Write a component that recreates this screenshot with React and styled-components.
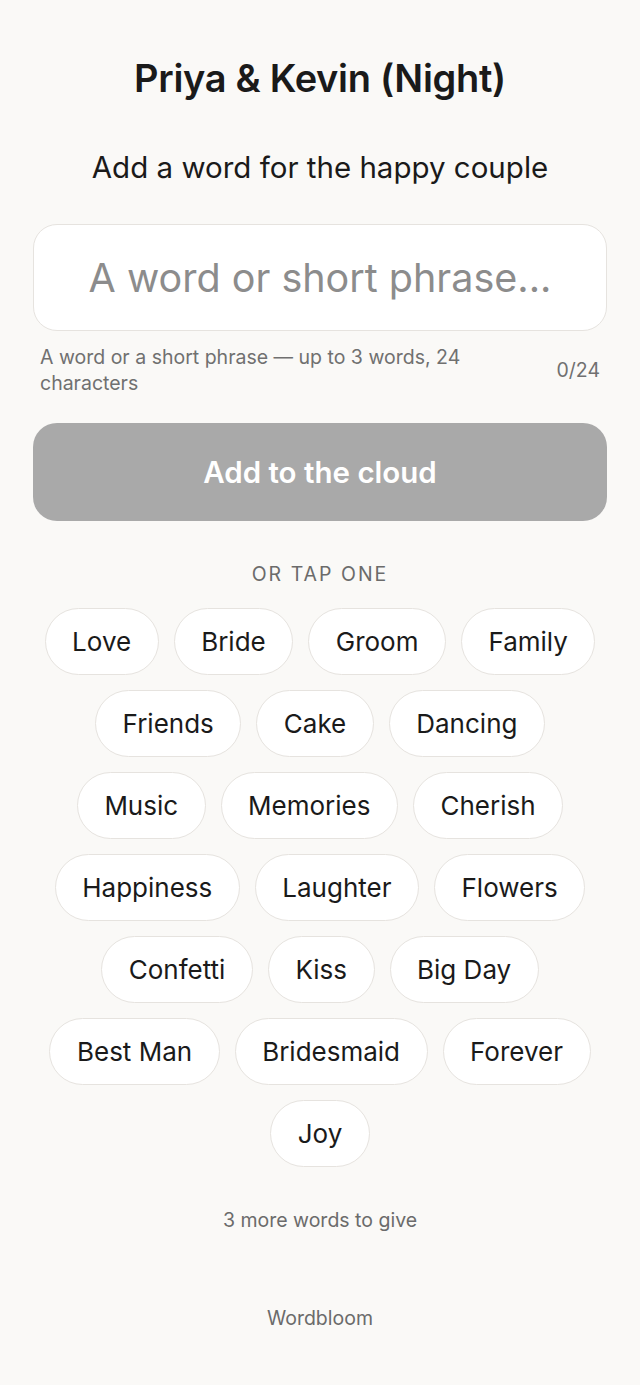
import React, { useState } from "react"
import styled, { createGlobalStyle } from "styled-components"

const GlobalStyle = createGlobalStyle`
  html, body {
    margin: 0;
    padding: 0;
    background: #faf9f7;
  }
  body {
    font-family: Inter, "Noto Sans", sans-serif;
    color: #1a1a1a;
  }
  * {
    box-sizing: border-box;
  }
`

const Page = styled.main`
  display: flex;
  flex-direction: column;
  align-items: stretch;
  padding: 56px 33px 54px;
  min-height: 1385px;
`

const Title = styled.h1`
  margin: 0;
  font-size: 38px;
  line-height: 44px;
  font-weight: 600;
  text-align: center;
  letter-spacing: -0.3px;
`

const Subtitle = styled.p`
  margin: 49px 0 0;
  font-size: 29.5px;
  line-height: 36px;
  font-weight: 400;
  text-align: center;
`

const WordInput = styled.input`
  margin-top: 39px;
  height: 107px;
  width: 100%;
  border: 1px solid #e6e3df;
  border-radius: 24px;
  background: #ffffff;
  font-family: inherit;
  font-size: 39.5px;
  text-align: center;
  color: #1a1a1a;
  outline: none;
  &::placeholder {
    color: #8c8c8c;
  }
`

const HelperRow = styled.div`
  display: flex;
  align-items: center;
  gap: 24px;
  margin-top: 13px;
  padding: 0 7px;
  font-size: 19.5px;
  line-height: 26px;
  color: #707070;
`

const HelperText = styled.span`
  flex: 1;
`

const Counter = styled.span`
  flex-shrink: 0;
`

const SubmitButton = styled.button`
  margin-top: 27px;
  height: 98px;
  border: none;
  border-radius: 24px;
  background: #a9a9a9;
  color: #ffffff;
  font-family: inherit;
  font-size: 29.5px;
  font-weight: 600;
  cursor: not-allowed;
`

const SectionLabel = styled.div`
  margin-top: 40px;
  font-size: 19.5px;
  line-height: 26px;
  letter-spacing: 2px;
  text-align: center;
  color: #6b6b6b;
`

const ChipCloud = styled.div`
  margin-top: 21px;
  display: flex;
  flex-wrap: wrap;
  justify-content: center;
  gap: 15px;
`

const Chip = styled.button`
  height: 67px;
  padding: 0 26.5px;
  border: 1px solid #e6e3df;
  border-radius: 999px;
  background: ${props => (props.picked ? "#f1eee9" : "#ffffff")};
  color: #1a1a1a;
  font-family: inherit;
  font-size: 26px;
  line-height: 39px;
  cursor: pointer;
`

const Remaining = styled.p`
  margin: 40px 0 0;
  font-size: 19.5px;
  line-height: 26px;
  text-align: center;
  color: #6b6b6b;
`

const Footer = styled.footer`
  margin-top: 72px;
  font-size: 19.5px;
  line-height: 26px;
  text-align: center;
  color: #6b6b6b;
`

const WORDS = [
  "Love", "Bride", "Groom", "Family",
  "Friends", "Cake", "Dancing",
  "Music", "Memories", "Cherish",
  "Happiness", "Laughter", "Flowers",
  "Confetti", "Kiss", "Big Day",
  "Best Man", "Bridesmaid", "Forever",
  "Joy",
]

export default function App() {
  const [word, setWord] = useState("")

  return (
    <>
      <GlobalStyle />
      <Page>
        <Title>Priya &amp; Kevin (Night)</Title>
        <Subtitle>Add a word for the happy couple</Subtitle>
        <WordInput
          value={word}
          maxLength={24}
          placeholder="A word or short phrase..."
          onChange={e => setWord(e.target.value)}
        />
        <HelperRow>
          <HelperText>A word or a short phrase — up to 3 words, 24 characters</HelperText>
          <Counter>{word.length}/24</Counter>
        </HelperRow>
        <SubmitButton disabled={!word.trim()}>Add to the cloud</SubmitButton>
        <SectionLabel>OR TAP ONE</SectionLabel>
        <ChipCloud>
          {WORDS.map(w => (
            <Chip key={w} picked={false} onClick={() => setWord(w)}>
              {w}
            </Chip>
          ))}
        </ChipCloud>
        <Remaining>3 more words to give</Remaining>
        <Footer>Wordbloom</Footer>
      </Page>
    </>
  )
}
